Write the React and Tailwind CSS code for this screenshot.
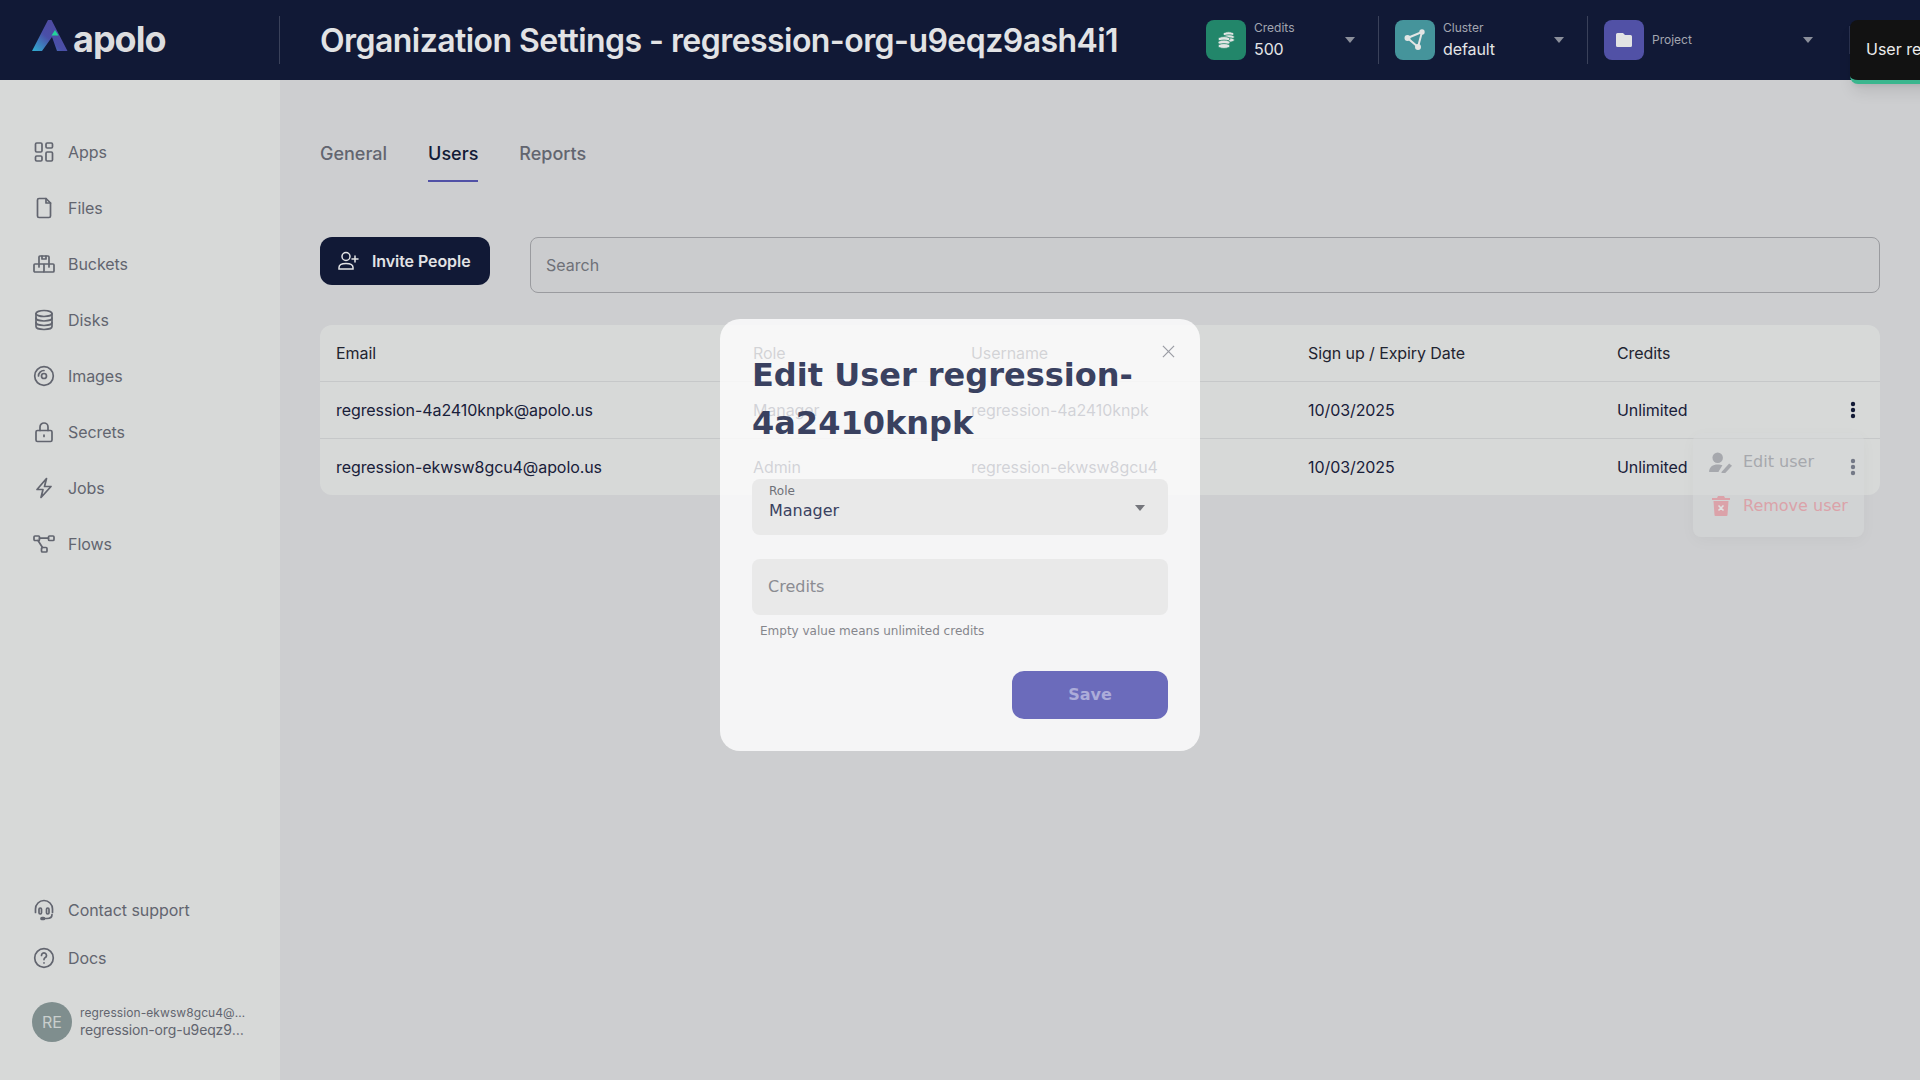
import React from "react";

const Stroke = ({ children, className = "w-6 h-6", sw = 1.7 }) => (
  <svg viewBox="0 0 24 24" fill="none" stroke="currentColor" strokeWidth={sw} strokeLinecap="round" strokeLinejoin="round" className={className}>
    {children}
  </svg>
);

const nav = [
  ["Apps", <><rect x="3.500" y="3" width="6.500" height="9" rx="1.200" /><rect x="14" y="3" width="6.500" height="5" rx="1.200" /><rect x="3.500" y="16" width="6.500" height="5" rx="1.200" /><rect x="14" y="12" width="6.500" height="9" rx="1.200" /></>],
  ["Files", <><path d="M14 2.500H7a1.500 1.500 0 0 0-1.500 1.500v16A1.500 1.500 0 0 0 7 21.500h10a1.500 1.500 0 0 0 1.500-1.500V7z" /><path d="M14 2.500V7h4.500" /></>],
  ["Buckets", <><path d="M7 11V5a1 1 0 0 1 1-1h8a1 1 0 0 1 1 1v6" /><path d="M10 4v3h4V4" /><rect x="2" y="12" width="10" height="8" rx="1" /><path d="M12 12h9a1 1 0 0 1 1 1v6a1 1 0 0 1-1 1h-9" /><path d="M7 12v3M17 12v3" /></>],
  ["Disks", <><ellipse cx="12" cy="5.500" rx="8" ry="3" /><path d="M4 5.500v13c0 1.700 3.600 3 8 3s8-1.300 8-3v-13" /><path d="M4 10c0 1.700 3.600 3 8 3s8-1.300 8-3M4 14.500c0 1.700 3.600 3 8 3s8-1.300 8-3" /></>],
  ["Images", <><circle cx="12" cy="12" r="9.300" /><circle cx="12" cy="12" r="2.500" /><path d="M6.500 12A5.500 5.500 0 0 1 12 6.500" /></>],
  ["Secrets", <><rect x="4" y="10.500" width="16" height="11" rx="1.500" /><path d="M8 10.500V7a4 4 0 0 1 8 0v3.500" /><path d="M12 15v1.500" /></>],
  ["Jobs", <path d="M14.500 2.500 5 13.500h6L9 21.500l10-11h-6.500z" />],
  ["Flows", <><rect x="2" y="4" width="5.500" height="4.500" rx="1" /><rect x="16.500" y="4" width="5.500" height="4.500" rx="1" /><rect x="9.500" y="15.500" width="5.500" height="4.500" rx="1" /><path d="M7.500 6.200h9M6 8.500l4.500 7" /></>],
];

const Chevron = ({ cls = "text-[#8b8f9b]" }) => (
  <svg viewBox="0 0 10 6" className={`w-[10px] h-[6px] ${cls}`} fill="currentColor"><path d="M0 0h10L5 6z" /></svg>
);

const Selector = ({ color, icon, label, value, width }) => (
  <div className={`flex items-center h-12 shrink-0 ${width}`}>
    <div className={`w-10 h-10 rounded-lg flex items-center justify-center ${color}`}>{icon}</div>
    <div className={`ml-2 flex-1 min-w-0 ${value ? "-mt-[2px]" : ""}`}>
      <div className="text-xs leading-4 text-[#a3a6b0]">{label}</div>
      {value && <div className="text-base leading-5 tracking-[-0.1px] text-[#e4e5e7] mt-[3px]">{value}</div>}
    </div>
    <Chevron />
  </div>
);

const Divider = () => <div className="w-px h-12 bg-[#3a415a] shrink-0" />;

const rows = [
  ["regression-4a2410knpk@apolo.us", "Manager", "regression-4a2410knpk", "10/03/2025", "Unlimited"],
  ["regression-ekwsw8gcu4@apolo.us", "Admin", "regression-ekwsw8gcu4", "10/03/2025", "Unlimited"],
];

const Dots = () => (
  <svg viewBox="0 0 6 18" className="w-[6px] h-[18px] text-[#121a36]" fill="currentColor">
    <circle cx="3" cy="3" r="2.200" /><circle cx="3" cy="9" r="2.200" /><circle cx="3" cy="15" r="2.200" />
  </svg>
);

const Cols = ({ cells, header, last }) => (
  <div className={`grid grid-cols-[417px_218px_337px_309px_1fr] items-center pl-4 pr-[24px] text-base tracking-[-0.08px] ${header ? "text-[#1f2430]" : "text-[#19203a]"} ${last ? "h-[56px]" : "h-[57px] border-b border-[#c6c8c9]"}`}>
    {cells.map((c, i) => <div key={i} className="leading-6 whitespace-nowrap">{c}</div>)}
  </div>
);

export default function App() {
  return (
    <div className="relative w-[1920px] h-[1080px] overflow-hidden flex flex-col bg-[#cdced0] font-['Inter',sans-serif]">
      <header className="h-20 shrink-0 bg-[#111936] flex items-center">
        <div className="w-[280px] h-12 flex items-center pl-8 border-r border-[#3a415a] shrink-0">
          <svg viewBox="0 0 36 32" className="w-[36px] h-[32px] -mt-2">
            <defs>
              <linearGradient id="lg" x1="0" y1="1" x2="0.8" y2="0.2"><stop offset="0" stopColor="#2fb0d2" /><stop offset="0.55" stopColor="#4a4fa8" /><stop offset="1" stopColor="#4f4aa0" /></linearGradient>
            </defs>
            <path d="M16 0h3.500L35.500 31H25L20 17 10 31H0z" fill="url(#lg)" />
            <path d="M23 10l3.500 5.500h-7z" fill="#22d39a" />
          </svg>
          <span className="ml-[5px] text-[36px] leading-none font-bold tracking-[-1px] text-[#dcdddf] -mt-[3px]">apolo</span>
        </div>
        <h1 className="ml-10 text-[32px] leading-[48px] font-semibold tracking-[-0.55px] text-[#e2e3e5] whitespace-nowrap w-[886px] shrink-0 mt-[1px]">Organization Settings - regression-org-u9eqz9ash4i1</h1>
        <Selector width="w-[149px]" color="bg-[#22866a]" label="Credits" value="500" icon={
          <svg viewBox="0 0 40 40" className="w-10 h-10" fill="#e2e5e4" stroke="#22866a" strokeWidth="0.800">
            <ellipse cx="22.500" cy="14" rx="5.500" ry="2.200" />
            <ellipse cx="23" cy="17" rx="5.500" ry="2.200" />
            <ellipse cx="23" cy="20" rx="5.500" ry="2.200" />
            <ellipse cx="18" cy="19" rx="6" ry="2.400" />
            <ellipse cx="18" cy="22.500" rx="6" ry="2.400" />
            <ellipse cx="18" cy="26" rx="6" ry="2.400" />
          </svg>
        } />
        <div className="ml-[23px]"><Divider /></div>
        <div className="ml-[16px]">
          <Selector width="w-[169px]" color="bg-[#45949b]" label="Cluster" value="default" icon={
            <svg viewBox="0 0 40 40" className="w-10 h-10" fill="#e2e5e4" stroke="#e2e5e4" strokeWidth="2">
              <path d="M12.500 18 27 12l-4 15z" fill="none" />
              <circle cx="12.500" cy="18" r="2" /><circle cx="27" cy="12" r="1.700" /><circle cx="23" cy="27" r="2" />
            </svg>
          } />
        </div>
        <div className="ml-[23px]"><Divider /></div>
        <div className="ml-[16px]">
          <Selector width="w-[209px]" color="bg-[#5151a6]" label="Project" icon={
            <svg viewBox="0 0 40 40" className="w-10 h-10" fill="#e2e3e4"><path d="M13.500 13H19l2 2h5.500a1.500 1.500 0 0 1 1.500 1.500v9a1.500 1.500 0 0 1-1.500 1.500h-13a1.500 1.500 0 0 1-1.500-1.500v-11A1.500 1.500 0 0 1 13.500 13z" /></svg>
          } />
        </div>
        <div className="ml-[36px] w-px h-7 bg-[#2c3350] shrink-0" />
      </header>

      <div className="flex-1 flex min-h-0">
        <aside className="w-[280px] shrink-0 bg-[#d7d9d8] flex flex-col pl-8 pt-[60px] pb-[38px] text-[#62656f] tracking-[-0.06px]">
          <nav className="flex flex-col gap-[32px]">
            {nav.map(([label, icon]) => (
              <div key={label} className="flex items-center h-6 gap-[12px]">
                <Stroke>{icon}</Stroke>
                <span className="text-base leading-6">{label}</span>
              </div>
            ))}
          </nav>
          <div className="mt-auto flex flex-col gap-6">
            <div className="flex items-center h-6 gap-[12px]">
              <Stroke><path d="M3.500 14.500V11a8.500 8.500 0 0 1 17 0v3.500" /><rect x="7" y="10" width="2.500" height="6" rx="1.200" /><rect x="14.500" y="10" width="2.500" height="6" rx="1.200" /><path d="M20 16.500c0 2.500-2 4-5 4h-3" /><rect x="9" y="19.500" width="3.500" height="2" rx="1" fill="currentColor" /></Stroke>
              <span className="text-base leading-6">Contact support</span>
            </div>
            <div className="flex items-center h-6 gap-[12px]">
              <Stroke><circle cx="12" cy="12" r="9.300" /><path d="M9.500 9.500a2.500 2.500 0 1 1 3.800 2.100c-.8.500-1.300 1-1.300 2" /><path d="M12 16.800v.2" /></Stroke>
              <span className="text-base leading-6">Docs</span>
            </div>
            <div className="flex items-center gap-2 mt-2">
              <div className="w-10 h-10 rounded-full bg-[#7f8e8e] text-[#c9cecd] flex items-center justify-center text-base shrink-0">RE</div>
              <div className="w-[167px] min-w-0">
                <div className="text-xs leading-4 tracking-[0.08px] truncate">regression-ekwsw8gcu4@apolo.us</div>
                <div className="text-sm leading-[18px] tracking-[-0.15px] truncate">regression-org-u9eqz9ash4i1</div>
              </div>
            </div>
          </div>
        </aside>

        <main className="flex-1 min-w-0 pl-10 pr-10">
          <div className="flex gap-[41px] h-[157px] pt-[56px] text-lg font-medium text-[#62656f]">
            <div className="h-[46px] leading-[28px] pt-1">General</div>
            <div className="h-[46px] leading-[28px] pt-1 text-[#121a36] border-b-2 border-[#5151a6]">Users</div>
            <div className="h-[46px] leading-[28px] pt-1">Reports</div>
          </div>
          <div className="flex gap-10 items-start">
            <button className="w-[170px] h-12 shrink-0 rounded-xl bg-[#111936] flex items-center pl-4 gap-[12px] text-[#e2e3e5] text-base font-semibold tracking-[-0.08px]">
              <svg viewBox="0 0 24 24" className="w-6 h-6" fill="none" stroke="currentColor" strokeWidth="1.500" strokeLinecap="round"><circle cx="10" cy="7.500" r="4" /><path d="M3 20v-1.500c0-2.500 2.500-4 7-4s7 1.500 7 4V20z" /><path d="M19 7v6M16 10h6" /></svg>
              Invite People
            </button>
            <div className="flex-1 h-14 rounded-lg border border-[#9a9b9f] flex items-center pl-[15px] text-base text-[#6f7178] bg-[#cbccce]">Search</div>
          </div>
          <div className="mt-8 rounded-xl bg-[#d7d9d8]">
            <Cols header cells={["Email", "Role", "Username", "Sign up / Expiry Date", "Credits"]} />
            {rows.map((r, i) => (
              <Cols key={i} last={i === 1} cells={[...r.slice(0, 4), <div className="flex items-center justify-between">{r[4]}<Dots /></div>]} />
            ))}
          </div>
        </main>
      </div>

      <div className="absolute left-[1693px] top-[433px] w-[171px] h-[104px] rounded-lg bg-[#d6d7d8]/50 shadow-[0_4px_16px_rgba(0,0,0,0.03)] pt-[7px] font-['DejaVu_Sans',sans-serif] text-base">
        <div className="flex items-center pl-4 gap-[9px] h-[44px] text-[#a6a8ad]">
          <svg viewBox="0 0 26 22" className="w-[25px] h-[21px]" fill="currentColor"><circle cx="9" cy="6" r="5.500" /><path d="M0 21c0-5.500 4-8 9-8 2 0 3.500.300 5 1l-4 6.500V21z" /><path d="M13 21l8-9 3 2.500-8 8.500h-3z" /></svg>
          Edit user
        </div>
        <div className="flex items-center pl-[19px] gap-[13px] h-[44px] text-[#dba2a9]">
          <svg viewBox="0 0 18 20" className="w-[18px] h-[20px]" fill="currentColor"><path d="M6 0h6l1 2h5v2H0V2h5zM1.500 5h15l-1 14a1 1 0 0 1-1 1h-11a1 1 0 0 1-1-1z" /><path d="M6.500 9.500l5 5M11.500 9.500l-5 5" stroke="#dfe0e0" strokeWidth="1.600" /></svg>
          Remove user
        </div>
      </div>

      <div className="absolute left-[720px] top-[319px] w-[480px] h-[432px] rounded-[20px] bg-[#ffffff]/80 px-8 font-['DejaVu_Sans',sans-serif] text-[#3a4160]">
        <svg viewBox="0 0 14 14" className="absolute right-[25px] top-[26px] w-[13px] h-[13px] text-[#9a9ca4]" fill="none" stroke="currentColor" strokeWidth="1.300"><path d="M1 1l12 12M13 1 1 13" /></svg>
        <h2 className="pt-8 text-[32px] leading-[48px] font-bold text-[#3a4160]">Edit User regression-4a2410knpk</h2>
        <div className="mt-8 h-14 rounded-lg bg-[#e9e9e9] relative pl-[17px]">
          <div className="pt-1 text-xs leading-4 text-[#6f7178]">Role</div>
          <div className="text-base leading-6 text-[#3a4160]">Manager</div>
          <div className="absolute right-[23px] top-[26px]"><Chevron cls="text-[#75767c]" /></div>
        </div>
        <div className="mt-6 h-14 rounded-lg bg-[#e9e9e9] flex items-center pl-4 text-base text-[#8b8c92]">Credits</div>
        <div className="mt-2 pl-2 text-xs leading-4 text-[#85868c]">Empty value means unlimited credits</div>
        <div className="flex justify-end mt-8">
          <button className="w-[156px] h-12 rounded-xl bg-[#6b6bbb] text-[#acacd9] text-base font-bold">Save</button>
        </div>
      </div>

      <div className="absolute left-[1850px] top-5 w-[300px] h-[64px] rounded-lg bg-[#121212] border-b-[4px] border-[#3bb68e] shadow-lg pl-[16px] pb-[2px] flex items-center text-base text-[#ececec] whitespace-nowrap">User regression-4a2410knpk was updated</div>
    </div>
  );
}
